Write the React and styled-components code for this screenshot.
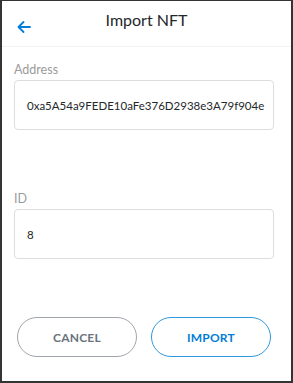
import styled, { createGlobalStyle } from "styled-components"

const GlobalStyle = createGlobalStyle`
  html, body {
    margin: 0;
    padding: 0;
    background: #ffffff;
  }
  * {
    box-sizing: border-box;
  }
`

const Frame = styled.div`
  width: 293px;
  height: 383px;
  border: 2px solid #343434;
  border-top-width: 1px;
  background: #ffffff;
  display: flex;
  flex-direction: column;
  font-family: Lato, "Noto Sans", sans-serif;
`

const Header = styled.div`
  height: 46px;
  display: grid;
  grid-template-columns: 40px 1fr 40px;
  border-bottom: 1px solid #f2f3f4;
`

const BackButton = styled.button`
  border: none;
  background: none;
  padding: 0;
  margin: 20px 0 0 15px;
  width: 16px;
  height: 14px;
  cursor: pointer;
  display: flex;
`

const Title = styled.h1`
  margin: 9px 0 0;
  font-size: 16px;
  line-height: 20px;
  font-weight: 400;
  color: #24272a;
  text-align: center;
`

const Content = styled.div`
  flex: 1;
  display: flex;
  flex-direction: column;
  padding: 15px 17px 24px 12px;
`

const Field = styled.div`
  display: flex;
  flex-direction: column;
  gap: 2px;
  margin-top: ${(p) => p.$top || 0}px;
`

const Label = styled.label`
  font-size: 12.5px;
  line-height: 16px;
  color: #9b9b9b;
`

const Input = styled.div`
  height: 50px;
  border: 1px solid #dcdddf;
  border-radius: 4px;
  padding: 0 12px;
  display: flex;
  align-items: center;
  font-size: 11.5px;
  color: #24272a;
  white-space: nowrap;
  overflow: hidden;
`

const Footer = styled.div`
  margin-top: auto;
  display: flex;
  gap: 14px;
  padding-left: 3px;
`

const Button = styled.button`
  width: 120px;
  height: 40px;
  border-radius: 20px;
  background: #ffffff;
  border: 1px solid ${(p) => (p.$primary ? "#3098dc" : "#a0a5ab")};
  color: ${(p) => (p.$primary ? "#037dd6" : "#6a737d")};
  font-family: Lato, "Noto Sans", sans-serif;
  font-size: 12px;
  font-weight: 700;
  letter-spacing: 0.2px;
  cursor: pointer;
`

function BackArrow() {
  return (
    <svg width="14" height="12" viewBox="0 0 14 12" fill="none">
      <path
        d="M13 6H1.5M6.5 1L1.5 6L6.5 11"
        stroke="#037dd6"
        strokeWidth="1.8"
        strokeLinecap="round"
        strokeLinejoin="round"
      />
    </svg>
  )
}

function App() {
  return (
    <>
      <GlobalStyle />
      <Frame>
        <Header>
          <BackButton>
            <BackArrow />
          </BackButton>
          <Title>Import NFT</Title>
        </Header>
        <Content>
          <Field>
            <Label>Address</Label>
            <Input>0xa5A54a9FEDE10aFe376D2938e3A79f904e</Input>
          </Field>
          <Field $top={61}>
            <Label>ID</Label>
            <Input>8</Input>
          </Field>
          <Footer>
            <Button>CANCEL</Button>
            <Button $primary>IMPORT</Button>
          </Footer>
        </Content>
      </Frame>
    </>
  )
}

export default App
